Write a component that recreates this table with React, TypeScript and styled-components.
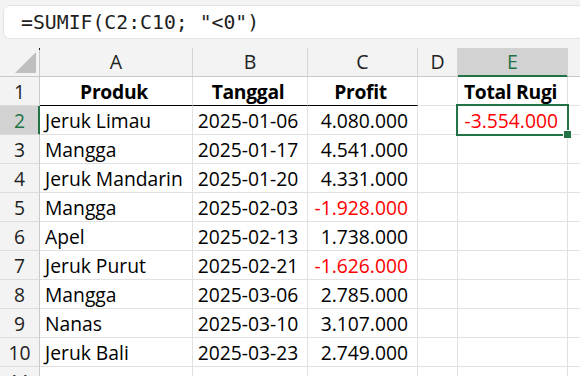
import React from "react";
import styled, { createGlobalStyle, css } from "styled-components";

const GREEN = "#217346";
const GRID = "#e1e1e1";
const HEAD_BG = "#f3f3f3";

const GlobalStyle = createGlobalStyle`
  html, body {
    margin: 0;
    padding: 0;
    background: #ffffff;
    overflow: hidden;
  }
  * {
    box-sizing: border-box;
  }
`;

const FormulaBar = styled.div`
  background: ${HEAD_BG};
  height: 48px;
  padding: 5px 0 9px 3px;
`;

const FormulaBox = styled.div`
  height: 34px;
  margin-right: -12px;
  background: #ffffff;
  border: 1px solid #e3e3e3;
  border-radius: 7px;
  display: flex;
  align-items: center;
  padding-left: 17px;
  font-family: "DejaVu Sans Mono", "Liberation Mono", monospace;
  font-size: 19.8px;
  color: #1f1f1f;
  white-space: pre;
`;

const Sheet = styled.div`
  display: grid;
  grid-template-columns: 40px 153px 115px 110px 40px 110px 1fr;
  grid-auto-rows: 29px;
  font-family: "Open Sans", "Liberation Sans", sans-serif;
  font-size: 19.3px;
  color: #000000;
`;

const Corner = styled.div`
  background: ${HEAD_BG};
  border-right: 1px solid #c9c9c9;
  border-bottom: 1px solid #c9c9c9;
  display: flex;
  align-items: flex-end;
  justify-content: flex-end;
  padding: 0 3px 3px 0;
  position: relative;
  &::before {
    content: "";
    position: absolute;
    right: -1px;
    top: 0;
    width: 1px;
    height: 2px;
    background: #222;
  }
`;

const ColHead = styled.div<{ $active?: boolean }>`
  background: ${(p) => (p.$active ? "#d2d2d2" : HEAD_BG)};
  color: ${(p) => (p.$active ? GREEN : "#222222")};
  border-right: 1px solid #d4d4d4;
  border-bottom: 1px solid ${(p) => (p.$active ? GREEN : "#c9c9c9")};
  ${(p) =>
    p.$active &&
    css`
      box-shadow: inset 0 -1px 0 ${GREEN};
    `}
  display: flex;
  align-items: center;
  justify-content: center;
  line-height: 20px;
  font-size: 19.5px;
`;

const RowHead = styled.div<{ $active?: boolean }>`
  background: ${(p) => (p.$active ? "#d2d2d2" : HEAD_BG)};
  color: ${(p) => (p.$active ? GREEN : "#222222")};
  border-right: 1px solid ${(p) => (p.$active ? GREEN : "#c9c9c9")};
  border-bottom: 1px solid #dddddd;
  ${(p) =>
    p.$active &&
    css`
      box-shadow: inset -1px 0 0 ${GREEN};
    `}
  display: flex;
  align-items: center;
  justify-content: center;
  padding-top: 1px;
  line-height: 20px;
`;

type Align = "left" | "center" | "right";

const Cell = styled.div<{
  $align?: Align;
  $bold?: boolean;
  $neg?: boolean;
  $rule?: boolean;
}>`
  position: relative;
  border-right: 1px solid ${GRID};
  border-bottom: 1px solid ${(p) => (p.$rule ? "#000000" : GRID)};
  display: flex;
  align-items: center;
  justify-content: ${(p) =>
    p.$align === "right" ? "flex-end" : p.$align === "center" ? "center" : "flex-start"};
  padding: 1px 9px 0 5px;
  line-height: 20px;
  white-space: nowrap;
  font-weight: ${(p) => (p.$bold ? 700 : 400)};
  letter-spacing: ${(p) => (p.$bold ? "-0.3px" : "0")};
  color: ${(p) => (p.$neg ? "#ff0000" : "#000000")};
`;

const Selection = styled.div`
  position: absolute;
  left: -2px;
  top: -2px;
  right: -2px;
  bottom: -2px;
  border: 2px solid ${GREEN};
  pointer-events: none;
  z-index: 2;
  &::after {
    content: "";
    position: absolute;
    right: -5px;
    bottom: -5px;
    width: 7px;
    height: 7px;
    background: ${GREEN};
    border: 1px solid #ffffff;
  }
`;

const rows = [
  ["Jeruk Limau", "2025-01-06", "4.080.000"],
  ["Mangga", "2025-01-17", "4.541.000"],
  ["Jeruk Mandarin", "2025-01-20", "4.331.000"],
  ["Mangga", "2025-02-03", "-1.928.000"],
  ["Apel", "2025-02-13", "1.738.000"],
  ["Jeruk Purut", "2025-02-21", "-1.626.000"],
  ["Mangga", "2025-03-06", "2.785.000"],
  ["Nanas", "2025-03-10", "3.107.000"],
  ["Jeruk Bali", "2025-03-23", "2.749.000"],
];

const cols = ["A", "B", "C", "D", "E", ""];

export default function App() {
  return (
    <>
      <GlobalStyle />
      <FormulaBar>
        <FormulaBox>=SUMIF(C2:C10; "&lt;0")</FormulaBox>
      </FormulaBar>
      <Sheet>
        <Corner>
          <svg width="21" height="21" viewBox="0 0 21 21">
            <polygon points="21,0 21,21 0,21" fill="#bfbfbf" />
          </svg>
        </Corner>
        {cols.map((c, i) => (
          <ColHead key={i} $active={c === "E"}>
            {c}
          </ColHead>
        ))}

        <RowHead>1</RowHead>
        <Cell $align="center" $bold $rule>Produk</Cell>
        <Cell $align="center" $bold $rule>Tanggal</Cell>
        <Cell $align="center" $bold $rule>Profit</Cell>
        <Cell />
        <Cell $align="center" $bold>Total Rugi</Cell>
        <Cell />

        {rows.map((r, i) => {
          const n = i + 2;
          return (
            <React.Fragment key={n}>
              <RowHead $active={n === 2}>{n}</RowHead>
              <Cell>{r[0]}</Cell>
              <Cell $align="center">{r[1]}</Cell>
              <Cell $align="right" $neg={r[2].startsWith("-")}>
                {r[2]}
              </Cell>
              <Cell />
              {n === 2 ? (
                <Cell $align="right" $neg>
                  -3.554.000
                  <Selection />
                </Cell>
              ) : (
                <Cell />
              )}
              <Cell />
            </React.Fragment>
          );
        })}

        <RowHead>11</RowHead>
        <Cell />
        <Cell />
        <Cell />
        <Cell />
        <Cell />
        <Cell />
      </Sheet>
    </>
  );
}
